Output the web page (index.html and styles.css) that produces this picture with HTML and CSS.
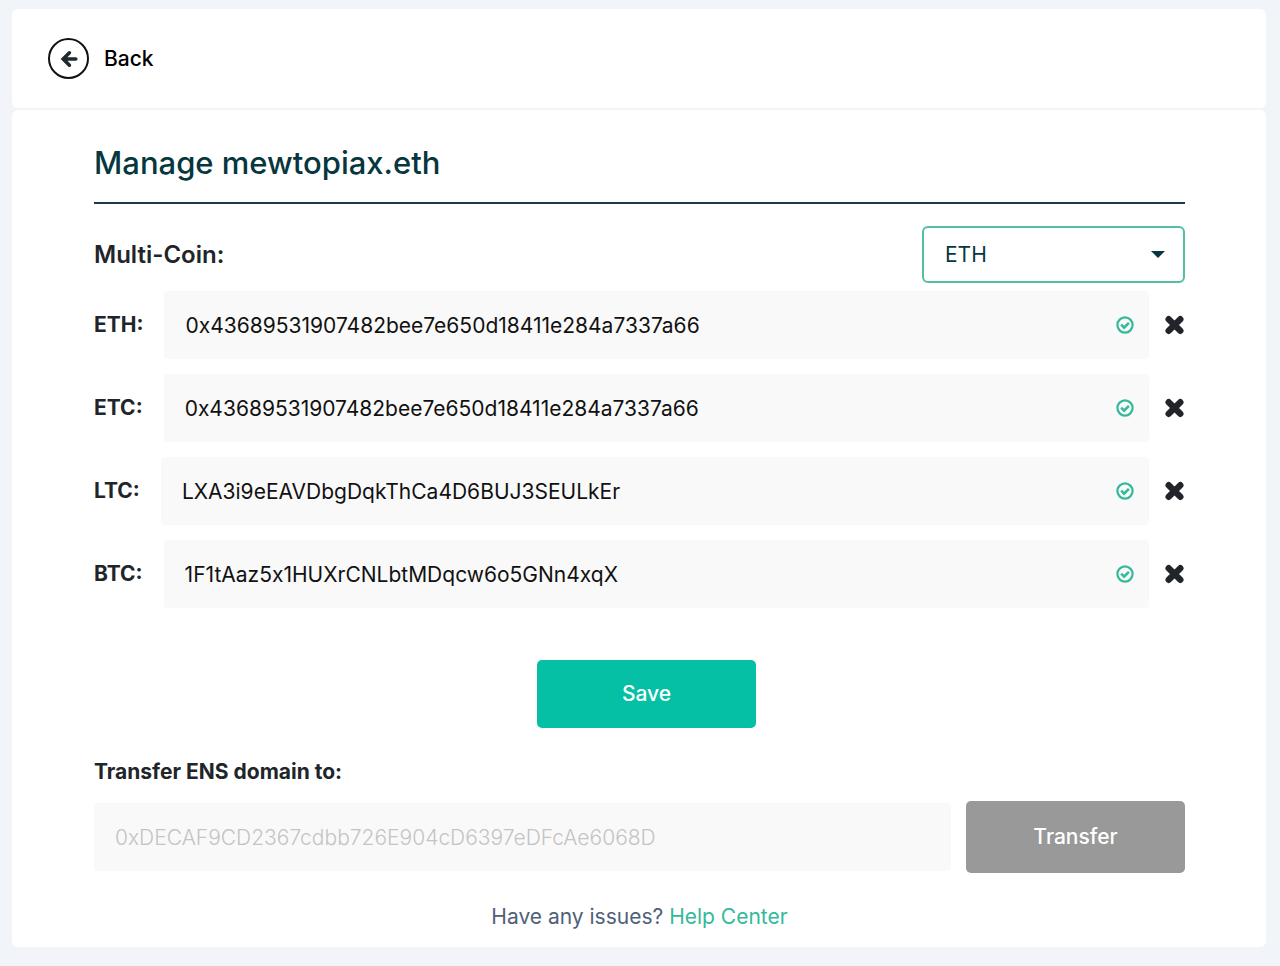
FILE: index.html
```html
<!DOCTYPE html>
<html lang="en">
<head>
  <meta charset="UTF-8" />
  <meta name="viewport" content="width=device-width, initial-scale=1.0"/>
  <title>Manage mewtopiax.eth</title>
  <link rel="stylesheet" href="styles.css">
</head>
<body>

<svg class="sprite" aria-hidden="true">
  <symbol id="check" viewBox="0 0 18 18">
    <circle cx="9" cy="9" r="7.6" fill="none" stroke="currentColor" stroke-width="2.2"/>
    <path d="M5.2 8.7l2.9 2.9 4.8-4.8" fill="none" stroke="currentColor" stroke-width="2.6"/>
  </symbol>
  <symbol id="cross" viewBox="0 0 20 20">
    <path d="M4.2 4.2l11.6 11.6M15.8 4.2L4.2 15.8" fill="none" stroke="currentColor" stroke-width="6.4" stroke-linecap="round"/>
  </symbol>
</svg>

<header class="back-bar">
  <button class="back" type="button">
    <span class="back-circle">
      <svg width="18" height="18" viewBox="0 0 18 18">
        <path d="M9.4 2.8L3.2 9l6.2 6.2M3.8 9h12" fill="none" stroke="currentColor" stroke-width="3.6" stroke-linecap="round" stroke-linejoin="miter"/>
      </svg>
    </span>
    Back
  </button>
</header>

<main class="manage">
  <h1>Manage mewtopiax.eth</h1>

  <form>
    <div class="multi-coin">
      <label for="coin">Multi-Coin:</label>
      <div class="select-wrap">
        <select id="coin">
          <option>ETH</option>
          <option>ETC</option>
          <option>LTC</option>
          <option>BTC</option>
        </select>
        <svg class="caret" width="14" height="7" viewBox="0 0 14 7"><path d="M0 0h14L7 7z" fill="currentColor"/></svg>
      </div>
    </div>

    <div class="coins">
      <div class="coin-row">
        <label for="eth">ETH:</label>
        <div class="field">
          <input id="eth" type="text" value="0x43689531907482bee7e650d18411e284a7337a66">
          <svg class="check"><use href="#check"/></svg>
        </div>
        <button class="remove" type="button" aria-label="Remove ETH"><svg><use href="#cross"/></svg></button>
      </div>
      <div class="coin-row">
        <label for="etc">ETC:</label>
        <div class="field">
          <input id="etc" type="text" value="0x43689531907482bee7e650d18411e284a7337a66">
          <svg class="check"><use href="#check"/></svg>
        </div>
        <button class="remove" type="button" aria-label="Remove ETC"><svg><use href="#cross"/></svg></button>
      </div>
      <div class="coin-row">
        <label for="ltc">LTC:</label>
        <div class="field">
          <input id="ltc" type="text" value="LXA3i9eEAVDbgDqkThCa4D6BUJ3SEULkEr">
          <svg class="check"><use href="#check"/></svg>
        </div>
        <button class="remove" type="button" aria-label="Remove LTC"><svg><use href="#cross"/></svg></button>
      </div>
      <div class="coin-row">
        <label for="btc">BTC:</label>
        <div class="field">
          <input id="btc" type="text" value="1F1tAaz5x1HUXrCNLbtMDqcw6o5GNn4xqX">
          <svg class="check"><use href="#check"/></svg>
        </div>
        <button class="remove" type="button" aria-label="Remove BTC"><svg><use href="#cross"/></svg></button>
      </div>
    </div>

    <div class="save-row">
      <button class="btn save" type="submit">Save</button>
    </div>
  </form>

  <form class="transfer">
    <label for="transfer">Transfer ENS domain to:</label>
    <div class="transfer-row">
      <input id="transfer" type="text" placeholder="0xDECAF9CD2367cdbb726E904cD6397eDFcAe6068D">
      <button class="btn disabled" type="button">Transfer</button>
    </div>
  </form>

  <p class="help">Have any issues? <a href="#">Help Center</a></p>
</main>

</body>
</html>
```
FILE: styles.css
```css
:root {
  --page: #f1f4f9;
  --green: #05c0a5;
  --teal: #35b99b;
  --title: #06363e;
  --text: #212529;
  --field: #f9f9f9;
}

* {
  box-sizing: border-box;
}

body {
  margin: 0;
  padding: 9px 14px 19px 12px;
  background: var(--page);
  color: var(--text);
  font-family: Inter, sans-serif;
  font-size: 21px;
  line-height: 24px;
}

button, input, select {
  font: inherit;
  color: inherit;
}

button {
  padding: 0;
  border: none;
  background: none;
  cursor: pointer;
}

.sprite {
  display: none;
}

.back-bar,
.manage {
  background: #fff;
  border-radius: 6px;
}

.back-bar {
  padding: 29px 36px;
  margin-bottom: 2px;
}

.back {
  display: flex;
  align-items: center;
  gap: 15px;
  color: #000;
  font-weight: 500;
}

.back-circle {
  display: flex;
  align-items: center;
  justify-content: center;
  width: 41px;
  height: 41px;
  border: 2px solid #111;
  border-radius: 50%;
  color: #1f2a2e;
}

.manage {
  padding: 34px 81px 18px 82px;
}

h1 {
  margin: 0 0 22px;
  padding-bottom: 20px;
  border-bottom: 2px solid #1c3a4e;
  color: var(--title);
  font-size: 31px;
  font-weight: 500;
  line-height: 38px;
}

.multi-coin {
  display: flex;
  align-items: center;
  justify-content: space-between;
  margin-bottom: 8px;
  font-size: 24px;
  font-weight: 600;
}

.select-wrap {
  position: relative;
  width: 263px;
}

select {
  width: 100%;
  height: 57px;
  padding: 0 21px;
  border: 2px solid #52bfa5;
  border-radius: 6px;
  background: #fff;
  color: var(--title);
  font-size: 21px;
  font-weight: 400;
  appearance: none;
}

.caret {
  position: absolute;
  top: 25px;
  right: 20px;
  color: var(--title);
  pointer-events: none;
}

.coins {
  display: grid;
  gap: 15px;
}

.coin-row {
  display: flex;
  align-items: center;
}

.coin-row label {
  margin-right: 21px;
  font-weight: 700;
}

.field {
  position: relative;
  flex: 1;
}

input {
  display: block;
  width: 100%;
  height: 68px;
  padding: 0 21px;
  border: none;
  border-radius: 4px;
  background: var(--field);
  color: #111;
  font-variant-ligatures: no-contextual;
}

.field input {
  padding-right: 48px;
}

input::placeholder {
  color: #c4c4c4;
  font-weight: 300;
  opacity: 1;
}

.check {
  position: absolute;
  top: 25px;
  right: 15px;
  width: 18px;
  height: 18px;
  color: var(--teal);
}

.remove {
  display: flex;
  margin-left: 15px;
}

.remove svg {
  width: 21px;
  height: 20px;
}

.btn {
  width: 219px;
  height: 68px;
  border-radius: 5px;
  color: #fff;
  font-weight: 500;
}

.save-row {
  display: flex;
  justify-content: center;
  padding: 52px 0 32px 14px;
}

.save {
  background: var(--green);
}

.transfer label {
  display: block;
  margin-bottom: 17px;
  font-weight: 700;
}

.transfer-row {
  display: flex;
  align-items: center;
  gap: 15px;
}

.transfer-row input {
  flex: 1;
}

.disabled {
  height: 72px;
  background: #999;
}

.help {
  margin: 32px 0 0;
  color: #506078;
  text-align: center;
}

.help a {
  color: var(--teal);
  text-decoration: none;
}
```
